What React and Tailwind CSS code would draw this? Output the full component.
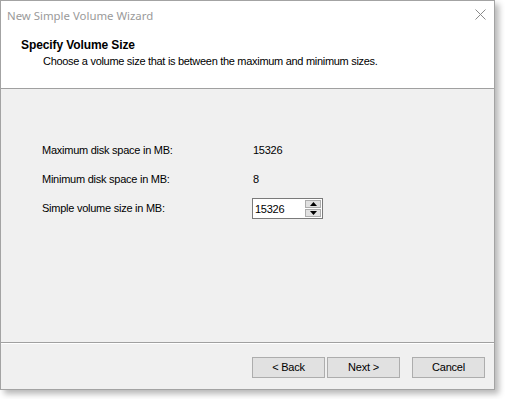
export default function App() {
  const sans = { fontFamily: '"Liberation Sans", Arial, sans-serif' };
  return (
    <div className="w-[505px] h-[399px] bg-white relative overflow-hidden">
      <div
        className="w-[495px] h-[390px] border border-[#a3a3a3] bg-[#f0f0f0] flex flex-col shadow-[4px_4px_6px_rgba(0,0,0,0.28)]"
        style={sans}
      >
        {/* title bar + header */}
        <div className="bg-white h-[87px] shrink-0 flex flex-col">
          <div className="h-[29px] flex items-center justify-between pl-[6px] pr-[8px]">
            <span className="text-[11.4px] text-[#9a9a9a]" style={{ fontFamily: '"Noto Sans", sans-serif' }}>
              New Simple Volume Wizard
            </span>
            <svg width="11" height="11" viewBox="0 0 11 11" className="mt-[-2px]">
              <path d="M0.5 0.5 L10.5 10.5 M10.5 0.5 L0.5 10.5" stroke="#8a8a8a" strokeWidth="1" />
            </svg>
          </div>
          <div className="pl-[20px] pt-[8px]">
            <div className="text-[12px] font-bold text-black leading-[14px] tracking-[-0.1px]">Specify Volume Size</div>
            <div className="text-[11px] text-black leading-[14px] pl-[22px] mt-[2px] tracking-[-0.3px]">
              Choose a volume size that is between the maximum and minimum sizes.
            </div>
          </div>
        </div>
        <div className="h-px bg-[#a0a0a0] shrink-0" />
        {/* body */}
        <div className="flex-1 pl-[41px] pt-[53px] text-[11px] text-black tracking-[-0.25px]">
          <div className="flex items-center h-[16px]">
            <span className="w-[211px]">Maximum disk space in MB:</span>
            <span>15326</span>
          </div>
          <div className="flex items-center h-[16px] mt-[13px]">
            <span className="w-[211px]">Minimum disk space in MB:</span>
            <span>8</span>
          </div>
          <div className="flex items-start mt-[11px]">
            <span className="w-[210px] pt-[2px]">Simple volume size in MB:</span>
            <div className="flex w-[71px] h-[21px] border border-[#7a7a7a] bg-white">
              <div className="flex-1 pl-[2px] pt-[3px] text-[11px] leading-[14px]">15326</div>
              <div className="w-[17px] flex flex-col gap-[1px] py-[1px] pr-[1px]">
                <div className="flex-1 bg-[#e1e1e1] border border-[#adadad] flex items-center justify-center">
                  <svg width="7" height="4" viewBox="0 0 7 4"><path d="M3.5 0 L7 4 L0 4 Z" fill="#000" /></svg>
                </div>
                <div className="flex-1 bg-[#e1e1e1] border border-[#adadad] flex items-center justify-center">
                  <svg width="7" height="4" viewBox="0 0 7 4"><path d="M0 0 L7 0 L3.5 4 Z" fill="#000" /></svg>
                </div>
              </div>
            </div>
          </div>
        </div>
        <div className="h-px bg-[#a0a0a0] shrink-0" />
        <div className="h-px bg-white shrink-0" />
        {/* footer */}
        <div className="h-[45px] shrink-0 flex items-start pt-[13px] pl-[251px] text-[11px] text-black tracking-[-0.2px]">
          <button className="w-[73px] h-[21px] bg-[#e1e1e1] border border-[#adadad] flex items-center justify-center">&lt; Back</button>
          <button className="w-[73px] h-[21px] ml-[2px] bg-[#e1e1e1] border border-[#adadad] flex items-center justify-center">Next &gt;</button>
          <button className="w-[73px] h-[21px] ml-[12px] bg-[#e1e1e1] border border-[#adadad] flex items-center justify-center">Cancel</button>
        </div>
      </div>
    </div>
  );
}
